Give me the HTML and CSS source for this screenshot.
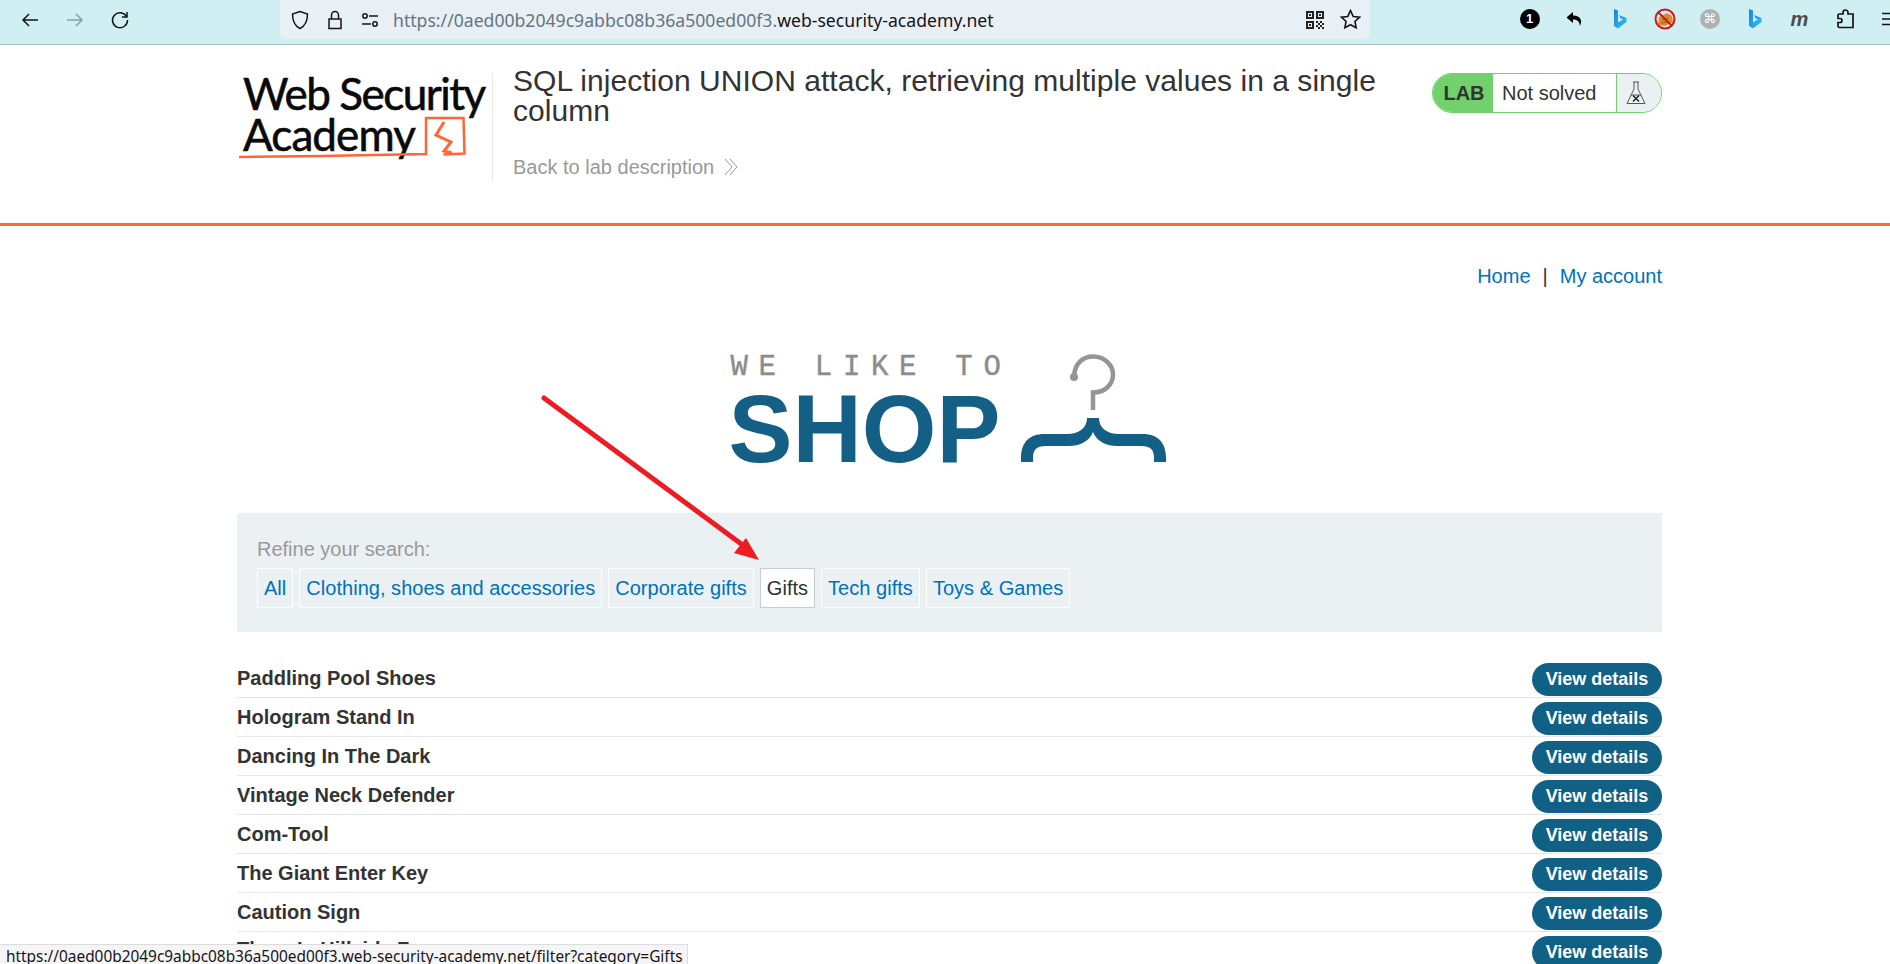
FILE: index.html
```html
<!DOCTYPE html>
<html lang="en">
<head>
<meta charset="utf-8">
<title>SQL injection UNION attack</title>
<link rel="stylesheet" href="styles.css">
</head>
<body>
<div class="toolbar">
  <div class="tool"><svg class="ic" viewBox="0 0 20 20"><path d="M18 10H3M9 4l-6 6 6 6"/></svg></div>
  <div class="tool"><svg class="ic dim" viewBox="0 0 20 20"><path d="M2 10h15M11 4l6 6-6 6"/></svg></div>
  <div class="tool"><svg class="ic" viewBox="0 0 20 20"><path d="M16.5 6.5A7.5 7.5 0 1 0 17.5 10M17 2v5h-5"/></svg></div>
  <div class="urlbar">
    <svg class="ic ub" viewBox="0 0 20 20"><path d="M10 1.5l7.5 2.5c0 7-1.5 11.500-7.500 14.500C4 15.500 2.500 11 2.500 4z"/></svg>
    <svg class="ic ub" viewBox="0 0 20 20"><path d="M4 9h12v9.500H4zM6.500 9V5a3.500 3.500 0 0 1 7 0v4"/></svg>
    <svg class="ic ub" viewBox="0 0 20 20"><path d="M9 6h9M2 14h9"/><circle cx="5" cy="6" r="2.200"/><circle cx="15" cy="14" r="2.200"/></svg>
    <div class="url"><span class="url-dim">https://0aed00b2049c9abbc08b36a500ed00f3.</span>web-security-academy.net</div>
    <svg class="qr" viewBox="0 0 18 18"><path d="M0 0h8v8H0zM2 2v4h4V2zM10 0h8v8h-8zM12 2v4h4V2zM0 10h8v8H0zM2 12v4h4v-4zM3 3h2v2H3zM13 3h2v2h-2zM3 13h2v2H3zM10 10h2v2h-2zM14 10h2v2h-2zM12 12h2v2h-2zM16 12h2v2h-2zM10 14h2v2h-2zM14 14h2v2h-2zM12 16h2v2h-2zM16 16h2v2h-2z" fill-rule="evenodd"/></svg>
    <svg class="ic star" viewBox="0 0 20 20"><path d="M10 1.500l2.600 5.600 6 .7-4.400 4.100 1.200 6L10 15l-5.400 2.900 1.200-6L1.400 7.800l6-.7z"/></svg>
  </div>
  <div class="exts">
    <div class="tool"><span class="badge">1</span></div>
    <div class="tool"><svg class="solid" viewBox="0 0 20 20"><path d="M8 3L1.500 8.500 8 14v-3.500c4 0 6.500 1.500 7 6.500 2.500-5.500 1-10-7-10.500z"/></svg></div>
    <div class="tool"><svg class="bing" viewBox="0 0 14 20"><defs><linearGradient id="bg" x1="0" y1="0" x2="1" y2="1"><stop offset="0" stop-color="#1b7fe8"/><stop offset="1" stop-color="#2fc4ea"/></linearGradient></defs><path fill="url(#bg)" d="M1 0l4 1.500v12l5-3-2.500-1.200L6 6l7.500 3v4L5 19.500 1 17z"/></svg></div>
    <div class="tool"><svg class="blocked" viewBox="0 0 22 22"><path fill="#e08a26" d="M5 9l8-4 5 3 1 6-8 4-7-1z"/><path fill="none" stroke="#8a5a20" d="M8 12l6-2M7 15l6-1"/><circle cx="11" cy="11" r="9.500" fill="none" stroke="#d3161c" stroke-width="2"/><path stroke="#d3161c" stroke-width="2" d="M4 4l14 14"/></svg></div>
    <div class="tool"><span class="cmd">⌘</span></div>
    <div class="tool"><svg class="bing" viewBox="0 0 14 20"><path fill="url(#bg)" d="M1 0l4 1.500v12l5-3-2.500-1.200L6 6l7.500 3v4L5 19.500 1 17z"/></svg></div>
    <div class="tool"><span class="m">m</span></div>
    <div class="tool"><svg class="ic puzzle" viewBox="0 0 20 20"><path d="M8 3.500a2.500 2.500 0 0 1 5 0V5h5v13.500H4.500c-1 0-1.500-.5-1.500-1.500v-3.500H5a1.800 1.800 0 0 0 0-4H3V6c0-.7.4-1 1-1h4z"/></svg></div>
    <div class="tool"><svg class="ic" viewBox="0 0 20 20"><path d="M2 4.500h16M2 10h16M2 15.500h16"/></svg></div>
  </div>
</div>

<header class="lab-header">
  <div class="wrap lab-inner">
    <div class="logo">
      <div class="logo-text web">Web Security</div>
      <div class="logo-text academy">Academy</div>
      <svg class="logo-mark" viewBox="0 0 240 50"><path class="lm" d="M1 44c60-.5 130-1.500 187-3V5h37.500l1 35.500-21 1"/><path class="bolt" d="M206 9l-8 13 15 7-7 9 8 2"/></svg>
    </div>
    <div class="lab-title">
      <h2>SQL injection UNION attack, retrieving multiple values in a single column</h2>
      <a class="back">Back to lab description <svg class="chev" viewBox="0 0 16 18"><path d="M2 1l7 8-7 8M7 1l7 8-7 8"/></svg></a>
    </div>
    <div class="lab-status">
      <span class="lab-tag">LAB</span>
      <span class="lab-state">Not solved</span>
      <span class="lab-icon"><svg viewBox="0 0 20 24"><path d="M7 1h6M8 1v7L1 22.500h18L12 8V1M5 14h10"/><path class="x" d="M7 14.500l6 6M13 14.500l-6 6"/></svg></span>
    </div>
  </div>
</header>

<main class="wrap">
  <nav class="top-nav"><a>Home</a><span class="sep">|</span><a>My account</a></nav>
  <div class="hero">
    <div class="hero-text">
      <div class="we">WE LIKE TO</div>
      <div class="shop">SHOP</div>
    </div>
    <svg class="hanger" viewBox="0 0 145 108">
      <path class="hook" d="M53 22C54 9 62 2.500 72 2.500c12 0 20 9 20 18 0 10-8 18-20 18V56"/>
      <circle class="hook-dot" cx="53" cy="23" r="4"/>
      <path class="brace" d="M66 64H78C78 74 86 80 98 80H122C136 80 145 88 145 104V108H133V104C133 96 130 92 120 92H96C86 92 76 88 72 78C68 88 58 92 48 92H25C15 92 12 96 12 104V108H0V104C0 88 9 80 23 80H46C58 80 66 74 66 64Z"/>
    </svg>
  </div>
  <section class="filter">
    <div class="filter-label">Refine your search:</div>
    <div class="filter-links">
      <a class="chip">All</a>
      <a class="chip">Clothing, shoes and accessories</a>
      <a class="chip">Corporate gifts</a>
      <a class="chip active">Gifts</a>
      <a class="chip">Tech gifts</a>
      <a class="chip">Toys &amp; Games</a>
    </div>
  </section>
  <section class="list">
    <div class="row"><span class="name">Paddling Pool Shoes</span><a class="btn">View details</a></div>
    <div class="row"><span class="name">Hologram Stand In</span><a class="btn">View details</a></div>
    <div class="row"><span class="name">Dancing In The Dark</span><a class="btn">View details</a></div>
    <div class="row"><span class="name">Vintage Neck Defender</span><a class="btn">View details</a></div>
    <div class="row"><span class="name">Com-Tool</span><a class="btn">View details</a></div>
    <div class="row"><span class="name">The Giant Enter Key</span><a class="btn">View details</a></div>
    <div class="row"><span class="name">Caution Sign</span><a class="btn">View details</a></div>
    <div class="row"><span class="name raised">Three In Hillside Fr</span><a class="btn">View details</a></div>
  </section>
</main>

<svg class="arrow" viewBox="0 0 230 170"><path class="shaft" d="M3 3L203 151"/><path class="head" d="M218 165L205 143L193 158Z"/></svg>
<div class="status">https://0aed00b2049c9abbc08b36a500ed00f3.web-security-academy.net/filter?category=Gifts</div>
</body>
</html>
```

FILE: styles.css
```css
* { box-sizing: border-box; }
html, body { margin: 0; height: 964px; overflow: hidden; background: #fff; }
body { position: relative; font-family: "Liberation Sans", Arial, sans-serif; font-size: 20px; color: #333; }

.toolbar { display: flex; align-items: flex-start; height: 45px; padding-left: 7px; background: #d0eff3; border-bottom: 1px solid #a7bec1; overflow: hidden; }
.tool { flex: none; width: 45px; height: 40px; display: flex; align-items: center; justify-content: center; }
.ic { width: 20px; height: 20px; fill: none; stroke: #15141a; stroke-width: 1.5; }
.ic.dim { stroke: #8b9ea6; }
.urlbar { flex: none; width: 1090px; height: 39px; margin-left: 138px; padding-left: 10px; display: flex; align-items: center; background: #e8f0f6; border-radius: 0 0 7px 7px; }
.ub { margin-right: 15px; width: 20px; height: 22px; }
.url { flex: 1; margin-left: -2px; font: 17.630px "Noto Sans", sans-serif; color: #15141a; white-space: nowrap; }
.url-dim { color: #66757f; }
.qr { width: 18px; height: 18px; margin-right: 16px; fill: #222; }
.star { width: 21px; height: 21px; margin-right: 9px; }
.exts { display: flex; flex: none; margin-left: 137px; }
.exts .tool { height: 37px; }
.badge { width: 20px; height: 20px; border-radius: 50%; background: #000; color: #fff; font: bold 13px/20px "Liberation Sans", sans-serif; text-align: center; }
.solid { width: 20px; height: 20px; fill: #000; }
.bing { width: 14px; height: 20px; }
.blocked { width: 22px; height: 22px; }
.cmd { width: 20px; height: 20px; border-radius: 50%; background: #aeb1b2; color: #fff; font: 13px/20px "DejaVu Sans", sans-serif; text-align: center; }
.m { font: italic bold 20px/20px "Liberation Sans", sans-serif; color: #4a4a4f; }
.puzzle { stroke-width: 1.700; }

.wrap { width: 1425px; margin-left: 237px; }
.lab-header { height: 181px; border-bottom: 3px solid #ff6633; }
.lab-inner { display: flex; align-items: flex-start; }
.logo { position: relative; flex: none; width: 256px; height: 108px; padding-left: 6px; border-right: 1px solid #e6e6e6; margin-top: 28px; }
.logo-text { font: 400 44px/41px Lato, "Noto Sans", sans-serif; color: #0a0a0a; -webkit-text-stroke: .6px #0a0a0a; white-space: nowrap; }
.logo-text.web { letter-spacing: -1.500px; }
.logo-text.academy { letter-spacing: -.900px; }
.logo-mark { position: absolute; left: 1px; top: 40px; width: 240px; height: 50px; }
.lm { fill: none; stroke: #ff6633; stroke-width: 2.500; }
.bolt { fill: none; stroke: #ff6633; stroke-width: 3; }
.lab-title { flex: none; width: 900px; margin-left: 20px; padding-top: 21px; }
.lab-title h2 { margin: 0; font-size: 30px; line-height: 30px; font-weight: 400; letter-spacing: .03px; color: #333; }
.back { display: flex; align-items: center; gap: 9px; margin-top: 27px; color: #999; font-size: 20px; line-height: 28px; }
.chev { width: 16px; height: 18px; fill: none; stroke: #999; stroke-width: 1; }
.lab-status { flex: none; width: 230px; height: 40px; margin: 28px 0 0 19px; display: flex; border: 1px solid #70d16d; border-radius: 20px; overflow: hidden; }
.lab-tag { flex: none; width: 60px; background: #70d16d; font-weight: 700; line-height: 38px; text-align: center; color: #333; font-size: 20px; padding-left: 2px; }
.lab-state { flex: none; width: 124px; padding-left: 9px; line-height: 38px; border-right: 1px solid #70d16d; }
.lab-icon { flex: 1; padding-right: 6px; background: #ebf0f2; display: flex; align-items: center; justify-content: center; }
.lab-icon svg { width: 20px; height: 24px; fill: none; stroke: #555; stroke-width: 1; }
.lab-icon .x { stroke: #222; stroke-width: 1.500; }

.top-nav { display: flex; justify-content: flex-end; gap: 12px; padding-top: 36px; line-height: 28px; }
.top-nav a { color: #0071bc; }
.hero { display: flex; justify-content: center; align-items: flex-end; gap: 20px; height: 178px; padding-right: 5px; }
.hero-text { flex: none; display: flex; flex-direction: column; }
.we { margin-right: -11px; margin-left: 2px; font: 400 29px/44px "Liberation Mono", monospace; letter-spacing: 10.700px; color: #8c8c8c; -webkit-text-stroke: .4px #8c8c8c; white-space: nowrap; }
.shop { font-weight: 700; font-size: 96px; line-height: 78px; color: #135f85; }
.hanger { flex: none; width: 145px; height: 108px; margin-bottom: 6px; }
.hook { fill: none; stroke: #959595; stroke-width: 4.500; }
.hook-dot { fill: #959595; }
.brace { fill: #135f85; }

.filter { height: 119px; margin-top: 45px; padding: 22px 20px 0; background: #ebf0f2; }
.filter-label { color: #999; line-height: 28px; }
.filter-links { display: flex; gap: 6px; margin-top: 5px; }
.chip { height: 40px; padding: 0 6px; border: 1px solid #fff; line-height: 38px; letter-spacing: .03px; color: #0071bc; white-space: nowrap; }
.chip.active { background: #fff; border-color: #c6ccd0; color: #333; }

.list { margin-top: 27px; }
.row { display: flex; justify-content: space-between; align-items: center; height: 39px; padding: 3px 0 0; border-bottom: 1px solid #e6e6e6; }
.name { margin-bottom: 2px; font-weight: 700; color: #333; }
.name.raised { margin-bottom: 6px; }
.btn { flex: none; width: 130px; height: 33px; border-radius: 17px; background: #116085; color: #fff; font-weight: 700; font-size: 18px; line-height: 32px; text-align: center; }

.arrow { position: absolute; left: 541px; top: 395px; width: 230px; height: 170px; }
.shaft { fill: none; stroke: #ed1c24; stroke-width: 5; stroke-linecap: round; }
.head { fill: #ed1c24; }
.status { position: absolute; left: 0; bottom: 0; width: 688px; height: 20px; padding-left: 6px; background: #f5f5f5; border-top: 1px solid #ddd; border-right: 1px solid #ddd; font: 15.400px/24px "Noto Sans", sans-serif; color: #15141a; white-space: nowrap; overflow: hidden; }
```
